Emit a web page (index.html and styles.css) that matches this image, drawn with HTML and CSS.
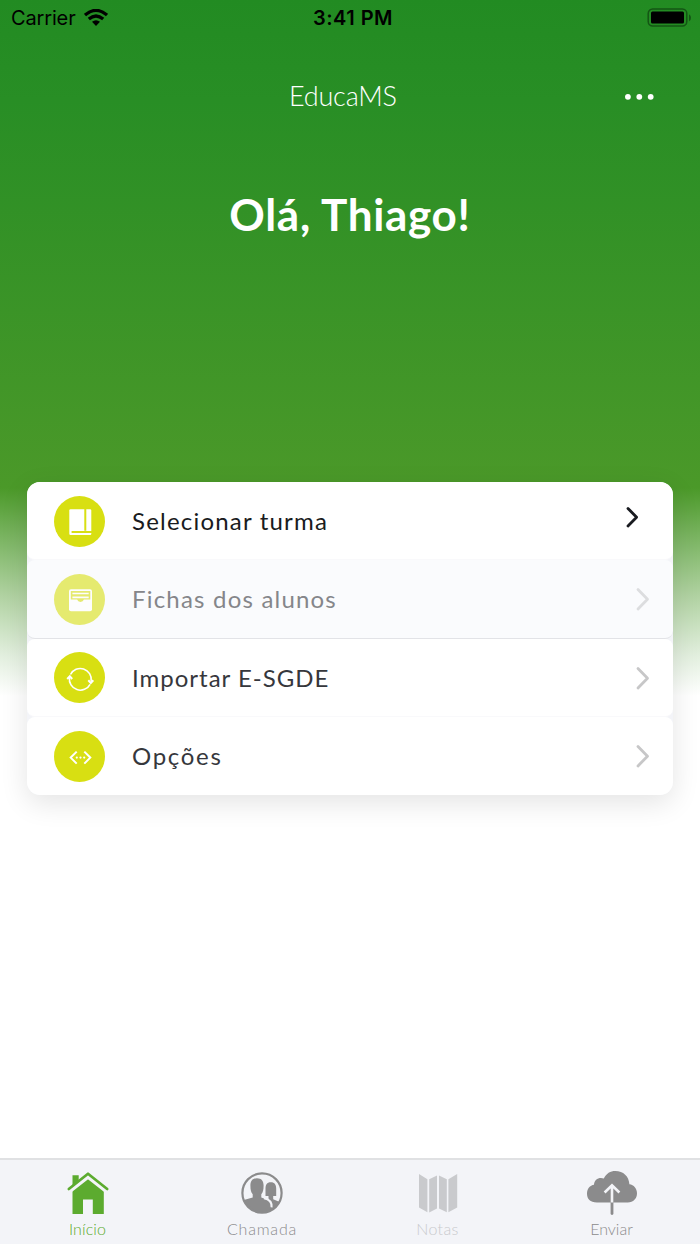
FILE: index.html
```html
<!DOCTYPE html>
<html lang="pt-BR">
<head>
<meta charset="utf-8">
<title>EducaMS</title>
<link rel="stylesheet" href="styles.css">
</head>
<body>
<div class="app">
  <header class="status">
    <div class="carrier"><span class="carrier-name">Carrier</span>
      <svg width="24" height="18" viewBox="0 0 24 18"><g fill="none" stroke="#000" stroke-width="3.3"><path d="M1 6.1Q12-3.3 23 6.1"/><path d="M4.8 10Q12 3.9 19.2 10"/></g><path d="M8 12.8Q12 9.7 16 12.8L12 17Z"/></svg>
    </div>
    <span class="clock">3:41 PM</span>
    <svg class="battery" width="44" height="20" viewBox="0 0 44 20"><rect x="1.2" y="1" width="38.6" height="17" rx="4.5" fill="none" stroke="#145514" stroke-width="1.5"/><rect x="4" y="3.5" width="33" height="12" rx="1.5"/><path d="M42 6.3q2 1 2 3.5T42 13.3Z" fill="#145514"/></svg>
  </header>
  <nav class="topbar">
    <span class="brand">EducaMS</span>
    <svg class="more" width="30" height="8" viewBox="0 0 30 8" fill="#fff"><circle cx="2.9" cy="4.8" r="2.9"/><circle cx="14.3" cy="4.8" r="2.9"/><circle cx="25.7" cy="4.8" r="2.9"/></svg>
  </nav>
  <h1 class="greeting">Olá, Thiago!</h1>
  <main class="card">
    <a class="row row-active">
      <svg class="badge" viewBox="0 0 51 51"><circle cx="25.5" cy="25.5" r="25.5" fill="#d8df12"/><rect x="15.3" y="13.3" width="22" height="25.6" rx="1.2" fill="#fff"/><path d="M31.3 13v21.8M17.6 35.9H38" stroke="#d8df12" stroke-width="2"/></svg>
      <span class="label l-select">Selecionar turma</span>
      <svg class="chevron" viewBox="0 0 14 24"><path d="m4 3.4 8.6 8.8L4 21"/></svg>
    </a>
    <a class="row row-disabled">
      <svg class="badge" viewBox="0 0 51 51"><circle cx="25.5" cy="25.5" r="25.5" fill="#d8df12"/><rect x="15" y="15.2" width="23" height="22" rx="2" fill="#fff"/><path d="M16.8 17h19.5v8.6h-6.4q-.8 2.4-3.4 2.4t-3.4-2.4h-6.3Z" fill="#d8df12"/><path d="M18.4 19.5h16.3M18.4 23.3h16.3" stroke="#fff" stroke-width="1.7"/></svg>
      <span class="label l-files">Fichas dos alunos</span>
      <svg class="chevron" viewBox="0 0 14 24"><path d="m2 2.5 9.5 9.7L2 21.9"/></svg>
    </a>
    <a class="row">
      <svg class="badge" viewBox="0 0 51 51"><circle cx="25.5" cy="25.5" r="25.5" fill="#d8df12"/><g fill="none" stroke="#fff" stroke-width="1.6"><path d="M16.5 22.5A11 11 0 0 1 37.2 29M36.1 32.3A11 11 0 0 1 15.5 25.5"/><path stroke-width="2" d="m13.2 27 2.6-2.7 2.4 2.7m16.1 1.3 2.5 2.7 2.5-2.7"/></g></svg>
      <span class="label l-import">Importar E-SGDE</span>
      <svg class="chevron" viewBox="0 0 14 24"><path d="m2 2.5 9.5 9.7L2 21.9"/></svg>
    </a>
    <a class="row">
      <svg class="badge" viewBox="0 0 51 51"><circle cx="25.5" cy="25.5" r="25.5" fill="#d8df12"/><path d="m22.7 20.6-6 6 6 6m7.6-12 6 6-6 6" fill="none" stroke="#fff" stroke-width="2"/><g fill="#fff"><circle cx="22.8" cy="26.6" r="1.1"/><circle cx="26.5" cy="26.6" r="1.1"/><circle cx="30.2" cy="26.6" r="1.1"/></g></svg>
      <span class="label l-options">Opções</span>
      <svg class="chevron" viewBox="0 0 14 24"><path d="m2 2.5 9.5 9.7L2 21.9"/></svg>
    </a>
  </main>
  <footer class="tabs">
    <a class="tab tab-home">
      <svg width="52" height="46" viewBox="0 0 52 46"><path fill="currentColor" d="M10.5 17V5.2h6.2V12L26 7.3l15.8 13.5V44h-11V29.5H21V44H10.5Z"/><path d="M7.5 21 26 6.4 44.5 21" fill="none" stroke="#f3f4f8" stroke-width="4.4"/><path d="M6.8 19 26 3.7 45.2 19" fill="none" stroke="currentColor" stroke-width="2.7" stroke-linecap="round" stroke-linejoin="round"/></svg>
      <span>Início</span>
    </a>
    <a class="tab tab-roll">
      <svg width="52" height="46" viewBox="0 0 52 46"><defs><clipPath id="face"><circle cx="26" cy="23" r="19.5"/></clipPath></defs><g clip-path="url(#face)" fill="currentColor"><path d="M34.8 12.2c4 0 5.4 2.6 5.4 6.4v7.4h-3v3.2L46 33v12H24V29l8.5.2V26h-3v-7.4c0-3.8 1.300-6.4 5.300-6.400Z"/><path d="M21 8.200c4.600 0 6.600 2.800 6.600 7.300 0 4.500-.6 6.800-2.300 8.700v3.400l4.700 1.700c4.200 1.500 5.600 3.800 5.600 7.700v9H4V31l12.700-3.400v-3.400c-1.700-1.900-2.300-4.200-2.300-8.700 0-4.500 2-7.300 6.600-7.300Z"/><path d="M28 28.300c5.800 1.100 8 4 7.600 9" fill="none" stroke="#f3f4f8" stroke-width="2"/></g><circle cx="26" cy="23" r="19.600" fill="none" stroke="currentColor" stroke-width="2.200"/></svg>
      <span>Chamada</span>
    </a>
    <a class="tab tab-off">
      <svg width="52" height="46" viewBox="0 0 52 46" fill="currentColor"><path d="m7 4 8.400 5.300v33L7 37.600Zm10.200 5.300L25 5.400v33l-7.800 4Zm9.800-3.900 7.800 3.900v33L27 38.400Zm9.400 3.900L45.200 4v33.600l-8.800 4.700Z"/></svg>
      <span>Notas</span>
    </a>
    <a class="tab tab-send">
      <svg width="52" height="46" viewBox="0 0 52 46"><path fill="currentColor" d="M11 32.500C4 32.500 1 28.500 1 23.700c0-5 3-8.400 7-9 .2-5 5-8 9.800-6.200C20.300 3.400 24.400 1 29.300 1c8 0 13.700 5.400 14.100 13.200 4.400.5 7.600 4.300 7.600 9 0 5.200-3.700 9.300-9.300 9.300Z"/><path d="M26 32.500V43.500" stroke="currentColor" stroke-width="2.800" stroke-linecap="round"/><path d="M26 32.500v-17m-7.400 7L26 15.400l7.400 7.100" fill="none" stroke="#f3f4f8" stroke-width="2.600"/></svg>
      <span>Enviar</span>
    </a>
  </footer>
</div>
</body>
</html>
```

FILE: styles.css
```css
* { box-sizing: border-box; }
body { margin: 0; font-family: Lato, sans-serif; }
svg { display: block; flex: none; }
.app {
  width: 700px; height: 1244px; display: flex; flex-direction: column;
  background: linear-gradient(#228b22 0, #288e25 100px, #4b9929 488px, #6fae54 525px, #b0d2a1 595px, #e2efde 655px, #fff 696px);
}
.status { height: 36px; padding: 0 9px 0 11px; display: grid; grid-template-columns: 1fr auto 1fr; align-items: center; font: 20px/36px Inter, sans-serif; color: #000; }
.carrier { display: flex; align-items: center; gap: 8px; }
.carrier-name { letter-spacing: -.15px; }
.clock { font-weight: 600; letter-spacing: .45px; padding-left: 4px; }
.battery { justify-self: end; }
.topbar { height: 120px; padding: 0 45px 0 289px; display: flex; align-items: center; justify-content: space-between; color: #fff; }
.brand { font-size: 27px; font-weight: 300; letter-spacing: -.2px; padding-bottom: 2px; }
.greeting { margin: 23px 0 0; height: 303px; font-size: 44px; line-height: 70px; letter-spacing: .7px; text-align: center; color: #fff; white-space: nowrap; }
.card { margin: 0 27px; height: 313px; display: grid; grid-template-rows: repeat(4, 1fr); background: #f3f4f8; border-radius: 13px; box-shadow: 0 8px 28px rgba(0,0,0,.11); }
.row { display: flex; align-items: center; padding: 1px 23px 0 27px; background: #fff; border-radius: 8px; color: #36373c; border-bottom: 1px solid #f9f9fb; }
.row:first-child { border-radius: 13px 13px 8px 8px; }
.row:last-child { border-radius: 8px 8px 13px 13px; border: 0; }
.row-active { color: #191b20; padding-right: 35px; }
.row-disabled { background: #fafbfd; color: #85868a; border-bottom-color: #e2e3e7; }
.row-disabled .badge { opacity: .6; }
.badge { width: 51px; height: 51px; }
.label { margin-left: 27px; flex: 1; font-size: 24px; line-height: 32px; white-space: nowrap; letter-spacing: 1.2px; }
.l-import { letter-spacing: 1px; }
.l-options { letter-spacing: 1.7px; }
.chevron { width: 14px; height: 24px; fill: none; stroke: #c7c7c8; stroke-width: 2.8; stroke-linecap: round; stroke-linejoin: round; }
.row-disabled .chevron { stroke: #dcdddf; }
.row-active .chevron { stroke: #191b20; transform: translateY(-4px); }
.tabs { margin-top: auto; height: 86px; padding-top: 10px; border-top: 2px solid #e0e1e3; background: #f3f4f8; display: grid; grid-template-columns: repeat(4, 1fr); }
.tab { display: flex; flex-direction: column; align-items: center; color: #8b8b8c; font-size: 16px; line-height: 26px; font-weight: 300; }
.tab-home { color: #5cab2f; letter-spacing: .1px; }
.tab-roll { letter-spacing: .8px; padding-right: 1px; }
.tab-send { padding-right: 2px; }
.tab-off { color: #c9cacd; letter-spacing: .4px; }
```
